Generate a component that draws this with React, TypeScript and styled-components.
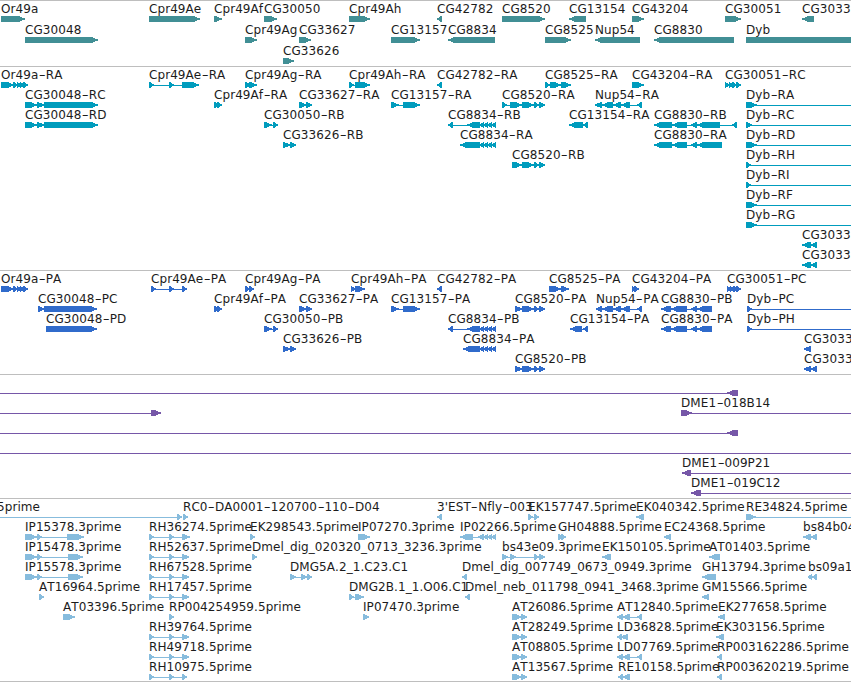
import React from 'react';
import styled, { createGlobalStyle } from 'styled-components';

const VIEW_WIDTH = 851;
const GLYPH_HEIGHT = 6;
const HEAD_LENGTH = 8;

const palette = {
  gene: '#418f95',
  transcript: '#009cbd',
  protein: '#306bcb',
  bac: '#7657a8',
  est: '#87bcdd',
  rule: '#bebebe',
};

const GlobalStyle = createGlobalStyle`
  body {
    margin: 0;
    background: white;
  }
`;

const Browser = styled.main`
  width: ${VIEW_WIDTH}px;
  overflow: hidden;
  border-bottom: 1px solid ${palette.rule};
  font-family: 'DejaVu Sans', sans-serif;
  font-size: 12px;
  font-kerning: none;
  letter-spacing: 0.07px;
  line-height: 14px;
  color: #1c1c1c;
`;

const TrackSection = styled.section<{ $gap?: number; $bottom: number }>`
  display: flex;
  flex-direction: column;
  gap: ${props => props.$gap || 0}px;
  padding: 1px 0 ${props => props.$bottom}px;
  border-top: 1px solid ${palette.rule};
`;

const TrackRow = styled.div`
  position: relative;
  height: 20px;
  padding-top: 14px;
  box-sizing: border-box;
`;

const Label = styled.span`
  position: absolute;
  top: 0;
  white-space: pre;
`;

const Hyphen = styled.span`
  display: inline-block;
  width: 4.4px;
  margin: 0 1.5px;
  transform: scaleX(1.6);
`;

const Glyphs = styled.svg`
  display: block;
  shape-rendering: crispEdges;
`;

type Exon = [number, number];

interface Feature {
  name: string;
  exons: Exon[];
  reverse?: boolean;
  // range of the connecting line when it runs past the exons
  from?: number;
  to?: number;
  labelAt?: number;
}

const fwd = (name: string, ...exons: Exon[]): Feature => ({ name, exons });
const rev = (name: string, ...exons: Exon[]): Feature => ({
  name,
  exons,
  reverse: true,
});
const open = (feature: Feature): Feature => ({ ...feature, to: VIEW_WIDTH });

const or49a: Exon[] = [[1, 14], [13, 18], [17, 21], [20, 24], [23, 28]];
const cg8834Tail: Exon[] = [[480, 484], [484, 488], [488, 492], [492, 496]];
const nup54Tail: Exon[] = [[602, 613], [613, 621], [621, 630], [637, 642]];
const cg8520Tail: Exon[] = [[522, 534], [534, 539], [539, 545]];
const rh: Exon[] = [[149, 154], [169, 174]];
const at: Exon[] = [[512, 522], [521, 527]];

const genes: Feature[][] = [
  [
    fwd('Or49a', [1, 25]),
    fwd('Cpr49Ae', [149, 200]),
    fwd('Cpr49Af', [214, 222]),
    fwd('CG30050', [264, 277]),
    fwd('Cpr49Ah', [349, 370]),
    rev('CG42782', [437, 442]),
    fwd('CG8520', [502, 545]),
    rev('CG13154', [569, 586]),
    fwd('CG43204', [632, 644]),
    fwd('CG30051', [725, 741]),
    rev('CG3033', [802, 814]),
  ],
  [
    fwd('CG30048', [25, 98]),
    fwd('Cpr49Ag', [245, 257]),
    fwd('CG33627', [299, 311]),
    fwd('CG13157', [391, 420]),
    rev('CG8834', [448, 495]),
    fwd('CG8525', [545, 571]),
    rev('Nup54', [595, 640]),
    rev('CG8830', [654, 734]),
    fwd('Dyb', [746, 870]),
  ],
  [fwd('CG33626', [283, 294])],
];

const transcripts: Feature[][] = [
  [
    fwd('Or49a-RA', ...or49a),
    fwd('Cpr49Ae-RA', [149, 154], [169, 174], [182, 199]),
    fwd('Cpr49Ag-RA', [245, 251], [249, 257]),
    fwd('Cpr49Ah-RA', [349, 354], [355, 370]),
    rev('CG42782-RA', [437, 442]),
    fwd('CG8525-RA', [545, 550], [550, 561], [561, 571]),
    fwd('CG43204-RA', [632, 637], [634, 644]),
    fwd('CG30051-RC', [725, 729], [729, 733], [732, 737], [736, 741]),
  ],
  [
    fwd('CG30048-RC', [25, 37], [37, 44], [44, 98]),
    fwd('Cpr49Af-RA', [214, 219], [217, 222]),
    fwd('CG33627-RA', [299, 307], [306, 312]),
    fwd('CG13157-RA', [391, 399], [403, 420]),
    fwd('CG8520-RA', [502, 507], [510, 522], ...cg8520Tail),
    rev('Nup54-RA', [595, 602], ...nup54Tail),
    open(fwd('Dyb-RA', [746, 757])),
  ],
  [
    fwd('CG30048-RD', [25, 37], [37, 44], [44, 98]),
    fwd('CG30050-RB', [264, 272], [273, 278]),
    rev('CG8834-RB', [448, 453], [467, 480], ...cg8834Tail),
    rev('CG13154-RA', [569, 583], [583, 588]),
    rev('CG8830-RB', [654, 672], [672, 687], [691, 697], [697, 720], [732, 737]),
    open(fwd('Dyb-RC', [746, 752])),
  ],
  [
    fwd('CG33626-RB', [283, 290], [290, 296]),
    rev('CG8834-RA', [460, 480], ...cg8834Tail),
    rev('CG8830-RA', [654, 672], [672, 687], [691, 697], [697, 722]),
    open(fwd('Dyb-RD', [746, 757])),
  ],
  [
    fwd('CG8520-RB', [512, 522], ...cg8520Tail),
    open(fwd('Dyb-RH', [746, 751])),
  ],
  [open(fwd('Dyb-RI', [746, 751]))],
  [open(fwd('Dyb-RF', [746, 757]))],
  [open(fwd('Dyb-RG', [746, 757]))],
  [rev('CG3033', [802, 811], [811, 817])],
  [rev('CG3033', [802, 811], [811, 817])],
];

const proteins: Feature[][] = [
  [
    fwd('Or49a-PA', ...or49a),
    fwd('Cpr49Ae-PA', [151, 156], [169, 174], [182, 187]),
    fwd('Cpr49Ag-PA', [245, 250], [249, 254]),
    fwd('Cpr49Ah-PA', [351, 355], [355, 365]),
    rev('CG42782-PA', [437, 442]),
    fwd('CG8525-PA', [549, 561], [561, 569]),
    fwd('CG43204-PA', [632, 636], [634, 639]),
    fwd('CG30051-PC', [727, 731], [730, 734], [733, 738], [736, 741]),
  ],
  [
    fwd('CG30048-PC', [38, 44], [44, 97]),
    fwd('Cpr49Af-PA', [214, 219], [217, 222]),
    fwd('CG33627-PA', [299, 307], [306, 312]),
    fwd('CG13157-PA', [391, 399], [403, 420]),
    fwd('CG8520-PA', [515, 522], ...cg8520Tail),
    rev('Nup54-PA', [596, 602], ...nup54Tail),
    rev('CG8830-PB', [661, 671], [671, 687], [691, 697], [697, 712]),
    open(fwd('Dyb-PC', [747, 752])),
  ],
  [
    fwd('CG30048-PD', [46, 97]),
    fwd('CG30050-PB', [264, 272], [273, 278]),
    rev('CG8834-PB', [448, 453], [467, 480], ...cg8834Tail),
    rev('CG13154-PA', [570, 582], [583, 588]),
    rev('CG8830-PA', [661, 671], [671, 687], [691, 697], [697, 712]),
    open(fwd('Dyb-PH', [747, 752])),
  ],
  [
    fwd('CG33626-PB', [283, 290], [290, 296]),
    rev('CG8834-PA', [463, 480], ...cg8834Tail),
    rev('CG3033', [804, 811]),
  ],
  [
    fwd('CG8520-PB', [515, 522], ...cg8520Tail),
    rev('CG3033', [804, 811], [811, 817]),
  ],
];

const bacs: Feature[][] = [
  [{ name: '', exons: [[727, 738]], reverse: true, from: 0 }],
  [
    { name: '', exons: [[151, 161]], from: 0 },
    open(fwd('DME1-018B14', [681, 692])),
  ],
  [{ name: '', exons: [[727, 738]], reverse: true, from: 0 }],
  [{ name: '', exons: [], from: 0, to: VIEW_WIDTH }],
  [open(rev('DME1-009P21', [682, 691]))],
  [open(rev('DME1-019C12', [691, 701]))],
];

const ests: Feature[][] = [
  [
    { name: '5prime', exons: [[177, 182]], from: 0, labelAt: -3 },
    fwd('RC0-DA0001-120700-110-D04', [183, 188]),
    rev("3'EST-Nfly-003", [437, 442]),
    fwd('EK157747.5prime', [528, 533], [534, 539]),
    rev('EK040342.5prime', [636, 644]),
    open(fwd('RE34824.5prime', [746, 756])),
  ],
  [
    fwd('IP15378.3prime', [25, 37], [37, 42], [67, 84]),
    fwd('RH36274.5prime', ...rh, [182, 190]),
    fwd('EK298543.5prime', [250, 255]),
    fwd('IP07270.3prime', [358, 370]),
    rev('IP02266.5prime', [460, 473], [478, 484], ...cg8834Tail),
    fwd('GH04888.5prime', [558, 563], [561, 566]),
    rev('EC24368.5prime', [664, 671]),
    rev('bs84b04', [803, 811], [811, 817]),
  ],
  [
    fwd('IP15478.3prime', [25, 37], [37, 42], [68, 83]),
    fwd('RH52637.5prime', ...rh, [182, 189]),
    fwd('Dmel_dig_020320_0713_3236.3prime', [252, 257]),
    fwd('bs43e09.3prime', [502, 508], [510, 516], [534, 539], [539, 545]),
    rev('EK150105.5prime', [602, 611]),
    rev('AT01403.5prime', [709, 720]),
  ],
  [
    fwd('IP15578.3prime', [25, 37], [37, 42], [68, 83]),
    fwd('RH67528.5prime', ...rh, [182, 189]),
    fwd('DMG5A.2_1.C23.C1', [290, 296], [301, 307], [307, 312]),
    rev('Dmel_dig_007749_0673_0949.3prime', [462, 467]),
    rev('GH13794.3prime', [702, 716]),
    rev('bs09a1', [808, 812], [812, 817]),
  ],
  [
    fwd('AT16964.5prime', [39, 44]),
    fwd('RH17457.5prime', ...rh, [182, 189]),
    fwd('DMG2B.1_1.O06.C1', [349, 354], [355, 364]),
    rev('Dmel_neb_011798_0941_3468.3prime', [465, 470]),
    rev('GM15566.5prime', [702, 709]),
  ],
  [
    fwd('AT03396.5prime', [63, 75]),
    fwd('RP004254959.5prime', [169, 174]),
    fwd('IP07470.3prime', [363, 369]),
    fwd('AT26086.5prime', ...at),
    rev('AT12840.5prime', [617, 623], [622, 630], [637, 642]),
    rev('EK277658.5prime', [718, 725]),
  ],
  [
    fwd('RH39764.5prime', ...rh, [182, 189]),
    fwd('AT28249.5prime', ...at),
    rev('LD36828.5prime', [617, 622], [621, 628]),
    rev('EK303156.5prime', [716, 724]),
  ],
  [
    fwd('RH49718.5prime', ...rh, [182, 189]),
    fwd('AT08805.5prime', ...at),
    rev('LD07769.5prime', [617, 623], [622, 630], [637, 642]),
    rev('RP003162286.5prime', [717, 722]),
  ],
  [
    fwd('RH10975.5prime', ...rh, [182, 187]),
    fwd('AT13567.5prime', ...at),
    rev('RE10158.5prime', [618, 623], [622, 630]),
    rev('RP003620219.5prime', [717, 722]),
  ],
];

const arrowPoints = ([start, end]: Exon, reverse?: boolean) => {
  const head = Math.min(end - start, HEAD_LENGTH);
  const tip = reverse ? start : end;
  const back = reverse ? end : start;
  const dir = reverse ? 1 : -1;
  const neck = tip + dir * head * 0.8;
  const shoulder = tip + dir * head * 0.5;

  return [
    [back, 0],
    [neck, 0],
    [shoulder, 1],
    [tip, 2.4],
    [tip, 3.6],
    [shoulder, GLYPH_HEIGHT - 1],
    [neck, GLYPH_HEIGHT],
    [back, GLYPH_HEIGHT],
  ].join(' ');
};

interface FeatureProps {
  feature: Feature;
}

const FeatureLabel: React.FC<FeatureProps> = ({ feature }) => (
  <Label style={{ left: feature.labelAt ?? feature.exons[0][0] }}>
    {feature.name.split('-').map((part, index) => (
      <React.Fragment key={index}>
        {index > 0 && <Hyphen>-</Hyphen>}
        {part}
      </React.Fragment>
    ))}
  </Label>
);

const FeatureGlyph: React.FC<FeatureProps> = ({ feature }) => {
  const { exons, reverse } = feature;
  const from = feature.from ?? exons[0][0];
  const to = feature.to ?? exons[exons.length - 1][1];
  const hasLine =
    exons.length !== 1 ||
    feature.from !== undefined ||
    feature.to !== undefined;

  return (
    <g>
      {hasLine && <rect x={from} y={3} width={to - from} height={1} />}
      {exons.map((exon, index) => (
        <polygon key={index} points={arrowPoints(exon, reverse)} />
      ))}
    </g>
  );
};

interface TrackProps {
  rows: Feature[][];
  color: string;
  gap?: number;
  bottom?: number;
}

const Track: React.FC<TrackProps> = ({ rows, color, gap, bottom = 2 }) => (
  <TrackSection $gap={gap} $bottom={bottom}>
    {rows.map((features, row) => (
      <TrackRow key={row}>
        {features.map((feature, index) =>
          feature.name ? <FeatureLabel key={index} feature={feature} /> : null,
        )}
        <Glyphs width={VIEW_WIDTH} height={GLYPH_HEIGHT} fill={color}>
          {features.map((feature, index) => (
            <FeatureGlyph key={index} feature={feature} />
          ))}
        </Glyphs>
      </TrackRow>
    ))}
  </TrackSection>
);

const App: React.FC = () => (
  <>
    <GlobalStyle />
    <Browser>
      <Track rows={genes} color={palette.gene} gap={1} />
      <Track rows={transcripts} color={palette.transcript} />
      <Track rows={proteins} color={palette.protein} />
      <Track rows={bacs} color={palette.bac} />
      <Track rows={ests} color={palette.est} bottom={1} />
    </Browser>
  </>
);

export default App;
